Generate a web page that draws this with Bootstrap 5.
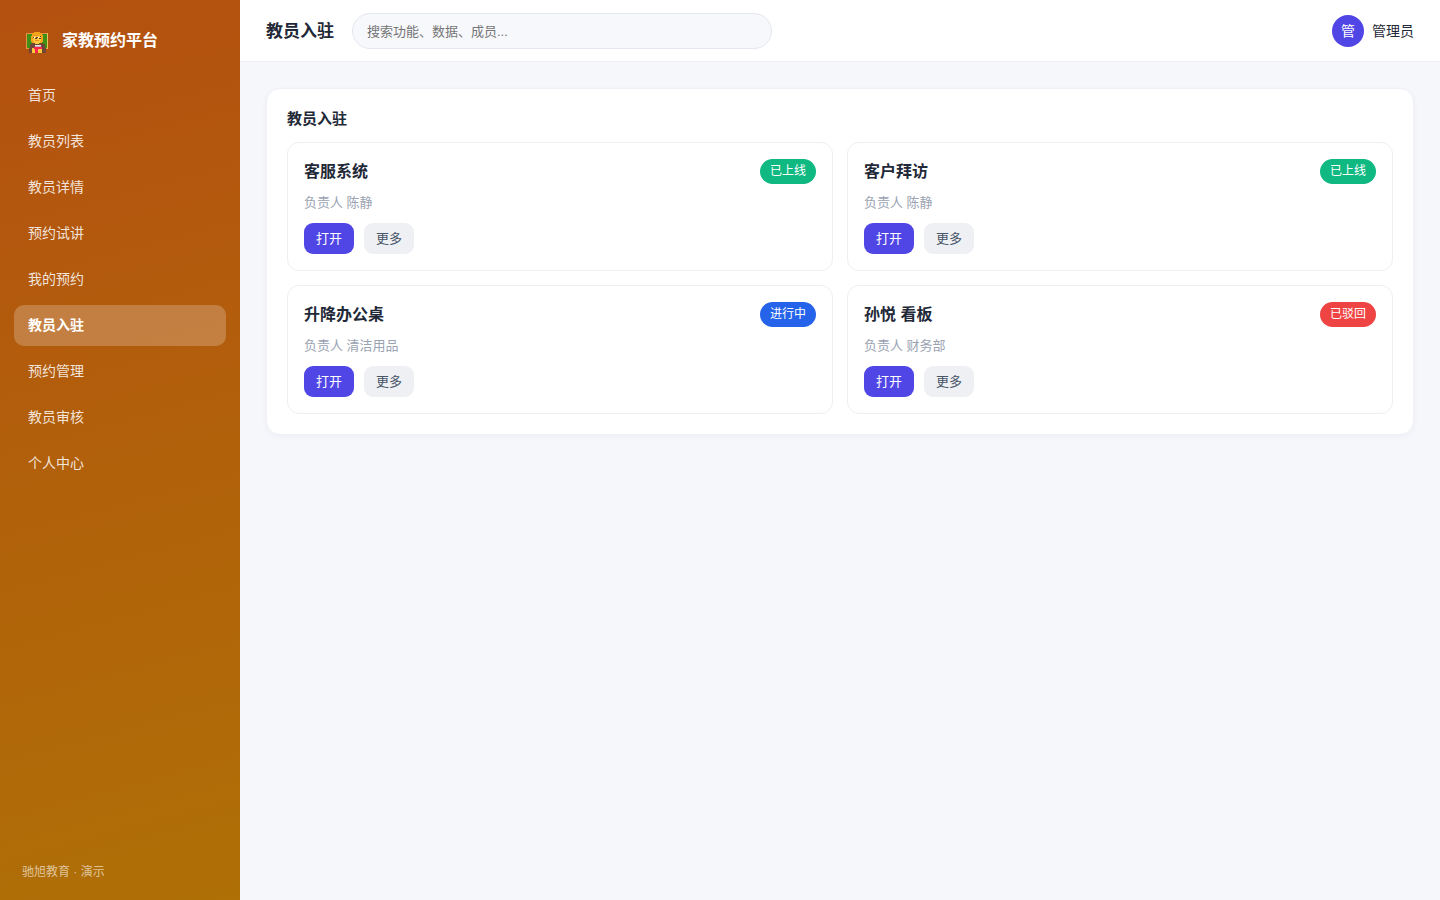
<!DOCTYPE html>
<html lang="zh-CN">
<head>
<meta charset="utf-8">
<meta name="viewport" content="width=device-width, initial-scale=1">
<title>教员入驻 - 家教预约平台</title>
<link href="https://cdn.jsdelivr.net/npm/bootstrap@5.3.0/dist/css/bootstrap.min.css" rel="stylesheet">
<style>
  body { font-family: "Liberation Sans", "Noto Sans CJK SC", sans-serif; font-size: 14px; line-height: 21px; color: #1f2937; background: #f5f7fb; }
  .sidebar { width: 240px; padding: 22px 14px 18px; background: linear-gradient(165deg, #b45010, #af7006); }
  .brand { height: 36px; padding: 0 12px; gap: 14px; font-size: 16px; font-weight: 700; color: #fff; margin-bottom: 17px; }
  .brand svg { width: 22px; height: 26px; }
  .side-nav { gap: 5px; }
  .side-nav .nav-link { padding: 10px 14px; border-radius: 10px; color: rgba(255,255,255,.85); }
  .side-nav .nav-link:hover { color: #fff; }
  .side-nav .nav-link.active { background: rgba(255,255,255,.22); color: #fff; font-weight: 700; }
  .side-foot { padding: 0 8px; font-size: 12px; line-height: 20px; color: rgba(255,255,255,.6); }
  .topbar { padding: 13px 26px 12px; gap: 18px; border-bottom: 1px solid #edeff5; }
  .page-title { font-size: 17px; line-height: 25px; font-weight: 700; }
  .search { max-width: 420px; height: 36px; padding: 0 14px; font-size: 13px; color: #1f2937; background: #f7f8fc; border: 1px solid #e5e7f0; }
  .search::placeholder { color: #757575; }
  .avatar { width: 32px; height: 32px; background: #4f46e5; color: #fff; }
  .content { padding: 26px; }
  .panel { padding: 20px; border: 1px solid #f0f1f6; border-radius: 14px; box-shadow: 0 2px 6px rgba(30,41,90,.04); }
  .panel-title { font-size: 15px; line-height: 20px; font-weight: 700; margin-bottom: 13px; }
  .item-grid { --bs-gutter-x: 14px; --bs-gutter-y: 14px; }
  .item { padding: 16px; border: 1px solid #eeeff3; border-radius: 12px; }
  .item-title { font-size: 16px; line-height: 26px; font-weight: 700; }
  .status { padding: 0 10px; font-size: 12px; line-height: 25px; font-weight: 400; }
  .st-online { background: #10b981; }
  .st-doing { background: #2563eb; }
  .st-reject { background: #ef4444; }
  .owner { font-size: 13px; line-height: 19px; color: #9aa3b2; margin: 8px 0 11px; }
  .item-head { align-items: flex-start; }
  .acts { gap: 10px; }
  .act { padding: 0 12px; font-size: 13px; line-height: 31px; border: 0; border-radius: 9px; }
  .act-main, .act-main:hover { background: #4f46e5; color: #fff; }
  .act-more, .act-more:hover { background: #eef0f4; color: #475569; }
</style>
</head>
<body>
<div class="d-flex min-vh-100">
  <aside class="sidebar d-flex flex-column flex-shrink-0">
    <div class="brand d-flex align-items-center">
      <svg viewBox="0 -5 22 26" shape-rendering="crispEdges" aria-hidden="true">
        <path fill="#e39442" d="M0 1h22v16H0z"/>
        <path fill="#e8c35a" d="M21 1h1v16h-1z"/>
        <path fill="#408f16" d="M1 2h20v14H1z"/>
        <path fill="#f5a31a" d="M8 0h6v1h2v2h1v7h-1v1H6v-1H5V4h1V1h2z"/>
        <path fill="#ffc83d" d="M7 4h8v5h-1v2h-1v2H9v-2H8V9H7z"/>
        <path fill="#f19020" d="M8 3h3v1H8zM9 8h4v1H9z"/>
        <path fill="#593d35" d="M7 5h1v1H7zm3 0h2v1h-2zm4-1h1v1h-1zM9 6h2v1H9zm4 0h2v1h-2z"/>
        <path fill="#fff" d="M8 5h1v1H8zm4 0h1v1h-1z"/>
        <path fill="#704637" d="M6 11h3v1h5v-1h3v1h2v4h1v5h-4v-4H6v4H3v-5h1v-4h2z"/>
        <path fill="#ffc83d" d="M6 16h10v5H6z"/>
        <path fill="#ff244f" d="M8 15h8v2h-4v4H9v-4H8z"/>
        <path fill="#eee4e9" d="M9 13h6v2H9z"/>
        <path fill="#593d35" d="M9 14h6v1H9z" opacity=".3"/>
      </svg>
      <span>家教预约平台</span>
    </div>
    <nav class="side-nav nav flex-column" aria-label="主导航">
      <a class="nav-link" href="#">首页</a>
      <a class="nav-link" href="#">教员列表</a>
      <a class="nav-link" href="#">教员详情</a>
      <a class="nav-link" href="#">预约试讲</a>
      <a class="nav-link" href="#">我的预约</a>
      <a class="nav-link active" aria-current="page" href="#">教员入驻</a>
      <a class="nav-link" href="#">预约管理</a>
      <a class="nav-link" href="#">教员审核</a>
      <a class="nav-link" href="#">个人中心</a>
    </nav>
    <div class="side-foot mt-auto">驰旭教育 · 演示</div>
  </aside>
  <div class="flex-grow-1">
    <header class="topbar bg-white d-flex align-items-center">
      <h1 class="page-title text-nowrap mb-0">教员入驻</h1>
      <input class="search form-control rounded-pill" type="search" aria-label="搜索" placeholder="搜索功能、数据、成员...">
      <div class="d-flex align-items-center gap-2 ms-auto text-nowrap">
        <span class="avatar rounded-circle d-flex align-items-center justify-content-center">管</span>
        <span>管理员</span>
      </div>
    </header>
    <main class="content">
      <section class="panel bg-white">
        <h2 class="panel-title">教员入驻</h2>
        <div class="item-grid row row-cols-1 row-cols-lg-2">
          <div class="col">
            <article class="item">
              <div class="item-head d-flex justify-content-between">
                <h3 class="item-title mb-0">客服系统</h3>
                <span class="status st-online badge rounded-pill">已上线</span>
              </div>
              <p class="owner">负责人 陈静</p>
              <div class="acts d-flex"><button type="button" class="act act-main btn">打开</button><button type="button" class="act act-more btn">更多</button></div>
            </article>
          </div>
          <div class="col">
            <article class="item">
              <div class="item-head d-flex justify-content-between">
                <h3 class="item-title mb-0">客户拜访</h3>
                <span class="status st-online badge rounded-pill">已上线</span>
              </div>
              <p class="owner">负责人 陈静</p>
              <div class="acts d-flex"><button type="button" class="act act-main btn">打开</button><button type="button" class="act act-more btn">更多</button></div>
            </article>
          </div>
          <div class="col">
            <article class="item">
              <div class="item-head d-flex justify-content-between">
                <h3 class="item-title mb-0">升降办公桌</h3>
                <span class="status st-doing badge rounded-pill">进行中</span>
              </div>
              <p class="owner">负责人 清洁用品</p>
              <div class="acts d-flex"><button type="button" class="act act-main btn">打开</button><button type="button" class="act act-more btn">更多</button></div>
            </article>
          </div>
          <div class="col">
            <article class="item">
              <div class="item-head d-flex justify-content-between">
                <h3 class="item-title mb-0">孙悦 看板</h3>
                <span class="status st-reject badge rounded-pill">已驳回</span>
              </div>
              <p class="owner">负责人 财务部</p>
              <div class="acts d-flex"><button type="button" class="act act-main btn">打开</button><button type="button" class="act act-more btn">更多</button></div>
            </article>
          </div>
        </div>
      </section>
    </main>
  </div>
</div>
<script src="https://cdn.jsdelivr.net/npm/bootstrap@5.3.0/dist/js/bootstrap.bundle.min.js"></script>
</body>
</html>
